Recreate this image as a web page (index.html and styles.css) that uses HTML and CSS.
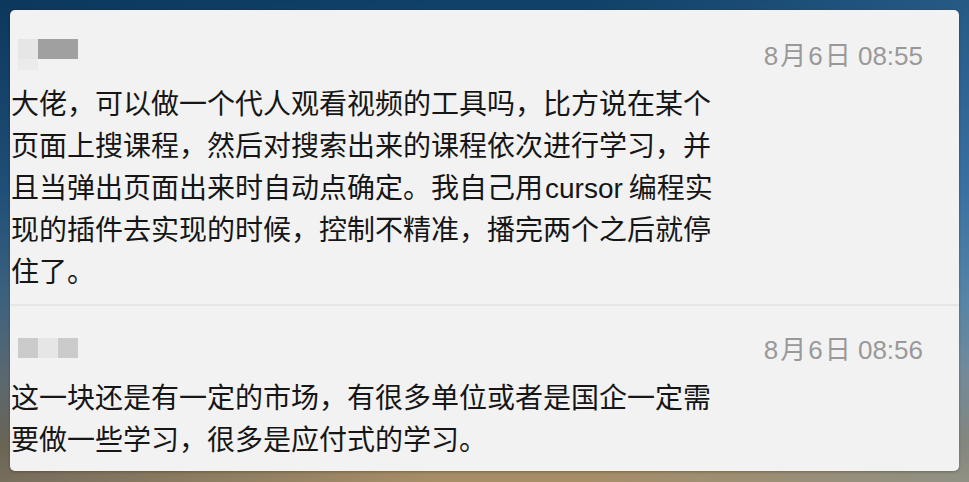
FILE: index.html
```html
<!DOCTYPE html>
<html lang="zh-CN">
<head>
<meta charset="utf-8">
<title>留言</title>
<link rel="stylesheet" href="styles.css">
</head>
<body>
<div class="card">
  <div class="msg msg-first">
    <div class="head">
      <div class="name name-a">
        <span class="px p1"></span><span class="px p2"></span><span class="px p2"></span>
        <span class="px p3 half"></span><span class="px half"></span><span class="px half"></span>
      </div>
      <div class="time"><span class="gap">8</span><span class="gap">月</span><span class="gap">6</span>日 08:55</div>
    </div>
    <p class="text">大佬，可以做一个代人观看视频的工具吗，比方说在某个页面上搜课程，然后对搜索出来的课程依次进行学习，并且当弹出页面出来时自动点确定。我自己用<span class="latin">cursor</span>编程实现的插件去实现的时候，控制不精准，播完两个之后就停住了。</p>
  </div>
  <div class="divider"></div>
  <div class="msg">
    <div class="head">
      <div class="name name-b">
        <span class="px q1"></span><span class="px q2"></span><span class="px q1"></span>
      </div>
      <div class="time"><span class="gap">8</span><span class="gap">月</span><span class="gap">6</span>日 08:56</div>
    </div>
    <p class="text">这一块还是有一定的市场，有很多单位或者是国企一定需要做一些学习，很多是应付式的学习。</p>
  </div>
</div>
</body>
</html>
```

FILE: styles.css
```css
html, body {
  margin: 0;
  padding: 0;
}

body {
  width: 969px;
  height: 482px;
  overflow: hidden;
  background:
    linear-gradient(90deg, rgba(5, 35, 65, 0.3) 0%, rgba(5, 35, 65, 0) 45%, rgba(90, 150, 200, 0) 60%, rgba(90, 150, 200, 0.3) 100%),
    linear-gradient(180deg, #0f4068 0%, #2c6290 40%, #557d98 62%, #7f8586 78%, #95805f 92%, #a88f68 100%);
  font-family: "Noto Sans CJK SC", sans-serif;
  box-sizing: border-box;
  padding: 10px 10px 11px 10px;
}

.card {
  background: #f2f2f2;
  border-radius: 5px;
  height: 461px;
  box-sizing: border-box;
  padding-top: 2px;
  box-shadow: 0 1px 3px rgba(0, 0, 0, 0.25);
  overflow: hidden;
}

.msg {
  padding: 22px 36px 13px 1px;
}

.head {
  height: 40px;
  display: flex;
  align-items: center;
  justify-content: space-between;
  padding-left: 7px;
}

.name {
  display: grid;
  grid-template-columns: repeat(3, 20px);
  grid-auto-rows: 20px;
}

.px.half {
  height: 11px;
}

.p1 { background: #e6e6e6; }
.p2 { background: #a0a0a0; }
.p3 { background: #ebebeb; }
.q1 { background: #cbcbcb; }
.q2 { background: #e6e6e6; }

.name-a {
  grid-template-rows: 20px 11px;
}

.time {
  font-family: "Liberation Sans", "Noto Sans CJK SC", sans-serif;
  font-size: 26px;
  color: #999999;
  line-height: 30px;
  padding-top: 3px;
  white-space: nowrap;
}

.gap {
  margin-right: 2px;
}

.text {
  margin: 7px 0 0 0;
  width: 712px;
  font-size: 28px;
  line-height: 42px;
  color: #161616;
  line-break: strict;
}

.latin {
  font-family: "Liberation Sans", sans-serif;
  line-height: 1;
  margin: 0 6px 0 2px;
}

.divider {
  height: 2px;
  background: #e6e6e6;
}
```
